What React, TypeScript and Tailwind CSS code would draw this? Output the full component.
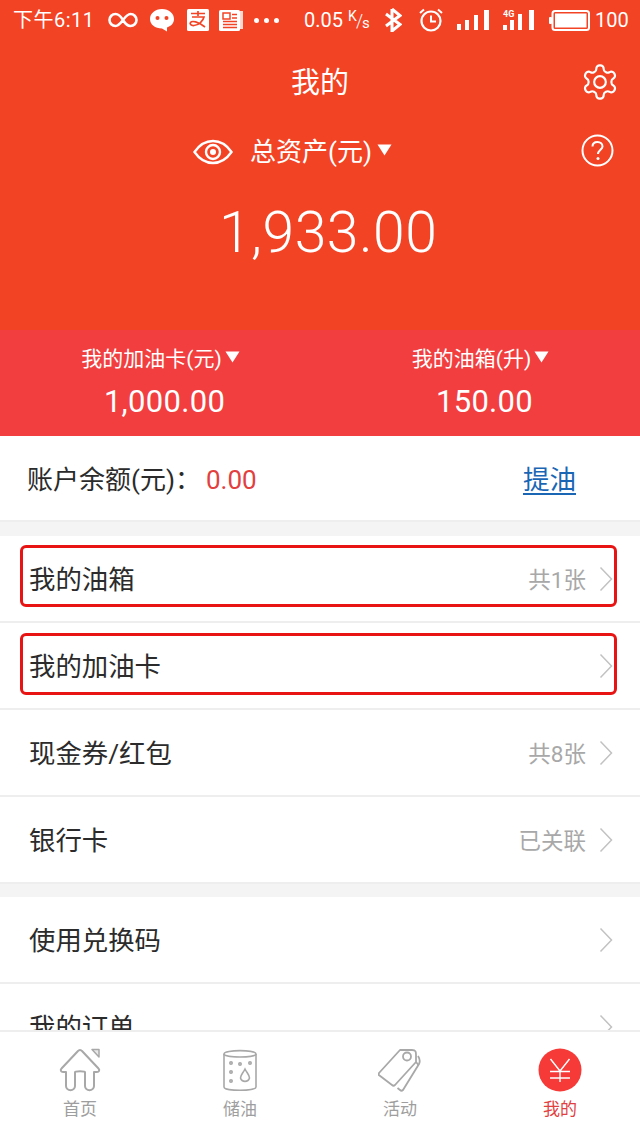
import React from 'react';

const Triangle = ({ className = '' }: { className?: string }) => (
  <svg width="15" height="12" viewBox="0 0 15 12" className={className}>
    <path d="M0.5 0.5h14L7.500 11.500z" fill="#fff" />
  </svg>
);

const Chevron = () => (
  <svg width="14" height="26" viewBox="0 0 14 26" className="shrink-0">
    <path d="M1.500 1.500L12.500 13L1.500 24.500" fill="none" stroke="#c2c2c2" strokeWidth="1.500" />
  </svg>
);

const StatusBar = () => (
  <div className="flex h-10 items-center text-white">
    <span className="ml-[13px] w-[96px] whitespace-nowrap text-[20px] leading-none tracking-[0.5px]">下午6:11</span>
    <svg width="30" height="16" viewBox="0 0 30 16" className="ml-[-1px]">
      <path d="M15 8C12 3 10 2 7.500 2A6 6 0 0 0 7.500 14C10 14 12 12 15 8C18 4 20 2 22.500 2A6 6 0 0 1 22.500 14C20 14 18 13 15 8Z" fill="none" stroke="#fff" strokeWidth="2.600" />
    </svg>
    <svg width="26" height="24" viewBox="0 0 26 24" className="ml-[11px]">
      <path d="M13 1C6 1 1 5.500 1 11C1 16.500 6 20.500 13 20.500L18 23.500L18 19.500C22.500 18 25 15 25 11C25 5.500 20 1 13 1Z" fill="#fff" />
      <circle cx="8.500" cy="10" r="2" fill="#f34325" />
      <circle cx="17.500" cy="10" r="2" fill="#f34325" />
    </svg>
    <svg width="22" height="22" viewBox="0 0 22 22" className="ml-[12px]">
      <rect width="22" height="22" rx="1.500" fill="#fff" />
      <path d="M4 4.500H18M11 2V7M5 8H17C16 12 12 16 7 16.500C4 16.800 2.500 15 3.500 13.500C5 11.500 11 12.500 18 18" fill="none" stroke="#f34325" strokeWidth="1.700" />
    </svg>
    <svg width="24" height="22" viewBox="0 0 24 22" className="ml-[10px]">
      <rect x="21" y="2" width="3" height="18" fill="#ffd9d0" />
      <rect x="0" y="1" width="21" height="21" rx="1.500" fill="#fff" />
      <rect x="4" y="4" width="7" height="6" fill="none" stroke="#f34325" strokeWidth="1.500" />
      <path d="M13 5.500H18M13 9H18M4 12.500H18M4 15.500H18M4 18.500H18" stroke="#f34325" strokeWidth="1.500" />
    </svg>
    <div className="ml-[11px] flex gap-[5px]">
      <span className="h-[5px] w-[5px] rounded-full bg-white" />
      <span className="h-[5px] w-[5px] rounded-full bg-white" />
      <span className="h-[5px] w-[5px] rounded-full bg-white" />
    </div>
    <span className="ml-[25px] text-[20px] leading-none">0.05</span>
    <span className="relative ml-[5px] h-[24px] w-[22px]">
      <span className="absolute left-0 top-[1px] text-[14px] leading-none">K</span>
      <span className="absolute left-[8px] top-[4px] text-[18px] font-light leading-none">/</span>
      <span className="absolute left-[14px] top-[8px] text-[15px] leading-none">s</span>
    </span>
    <svg width="18" height="24" viewBox="0 0 18 24" className="ml-[14px]">
      <path d="M8 1L8 23L16 16.500L2 6M8 1L16 7.500L2 18" fill="none" stroke="#fff" strokeWidth="3" />
    </svg>
    <svg width="24" height="24" viewBox="0 0 24 24" className="ml-[17px]">
      <circle cx="12" cy="13" r="9.500" fill="none" stroke="#fff" strokeWidth="2.200" />
      <path d="M12 7.500V13.500H17" fill="none" stroke="#fff" strokeWidth="2" />
      <path d="M1 5L5 1.500M23 5L19 1.500" stroke="#fff" strokeWidth="2" />
    </svg>
    <svg width="33" height="22" viewBox="0 0 33 22" className="ml-[14px]">
      <path d="M0 15h4v6H0zM8 11h4v10H8zM17 6h4v15h-4zM27 1h5v20h-5z" fill="#fff" />
    </svg>
    <svg width="33" height="22" viewBox="0 0 33 22" className="ml-[13px]">
      <path d="M0 16h4v5H0zM7 11h4v10H7zM15 5h4v16h-4zM26 1h5v20h-5z" fill="#fff" />
      <text x="0" y="8" fontSize="9" fontWeight="700" fill="#fff" fontFamily="Roboto, sans-serif">4G</text>
    </svg>
    <svg width="41" height="21" viewBox="0 0 41 21" className="ml-[13px]">
      <rect x="3.500" y="1" width="36.500" height="19" rx="2.500" fill="none" stroke="#fff" strokeWidth="2" />
      <rect x="6" y="3.500" width="31.500" height="14" fill="#fff" />
      <rect x="0" y="7" width="3" height="7" rx="1" fill="#fff" />
    </svg>
    <span className="ml-[5px] text-[20px] leading-none">100</span>
  </div>
);

const Header = () => (
  <div className="flex h-[330px] shrink-0 flex-col bg-[#f34325] text-white">
    <StatusBar />
    <div className="relative mt-[24px] flex h-[38px] items-center justify-center">
      <span className="text-[29px] leading-none">我的</span>
      <svg width="40" height="40" viewBox="0 0 24 24" className="absolute right-[20px] top-[-2px]" fill="none" stroke="#fff" strokeWidth="1.300" strokeLinejoin="round">
        <path d="M12.220 2h-.440a2 2 0 0 0-2 2v.180a2 2 0 0 1-1 1.730l-.430.250a2 2 0 0 1-2 0l-.150-.080a2 2 0 0 0-2.730.730l-.220.380a2 2 0 0 0 .730 2.730l.150.100a2 2 0 0 1 1 1.720v.510a2 2 0 0 1-1 1.740l-.150.090a2 2 0 0 0-.730 2.730l.220.380a2 2 0 0 0 2.730.730l.150-.080a2 2 0 0 1 2 0l.430.250a2 2 0 0 1 1 1.730V20a2 2 0 0 0 2 2h.440a2 2 0 0 0 2-2v-.180a2 2 0 0 1 1-1.730l.430-.250a2 2 0 0 1 2 0l.150.080a2 2 0 0 0 2.730-.730l.220-.390a2 2 0 0 0-.730-2.730l-.150-.080a2 2 0 0 1-1-1.740v-.500a2 2 0 0 1 1-1.740l.150-.090a2 2 0 0 0 .730-2.730l-.220-.380a2 2 0 0 0-2.730-.730l-.150.080a2 2 0 0 1-2 0l-.430-.250a2 2 0 0 1-1-1.730V4a2 2 0 0 0-2-2z" />
        <circle cx="12" cy="12" r="3.500" />
      </svg>
    </div>
    <div className="relative mt-[30px] flex h-[40px] items-center">
      <svg width="40" height="26" viewBox="0 0 40 26" className="ml-[193px]">
        <path d="M1.500 13C7 5 13 2 20 2C27 2 33 5 38.500 13C33 21 27 24 20 24C13 24 7 21 1.500 13Z" fill="none" stroke="#fff" strokeWidth="2.400" />
        <circle cx="20" cy="13" r="7" fill="none" stroke="#fff" strokeWidth="2.400" />
        <circle cx="20" cy="13" r="3" fill="#fff" />
      </svg>
      <span className="ml-[17px] whitespace-nowrap text-[26px] leading-none">总资产(元)</span>
      <Triangle className="ml-[5px] mt-[-4px]" />
      <svg width="33" height="33" viewBox="0 0 33 33" className="absolute right-[26px] top-[2px]">
        <circle cx="16.500" cy="16.500" r="15" fill="none" stroke="#fff" strokeWidth="2" />
        <path d="M11.500 12.500C11.500 9.500 13.500 8 16.500 8C19.500 8 21.500 10 21.500 12.500C21.500 15.500 17 16 17 20" fill="none" stroke="#fff" strokeWidth="2" />
        <circle cx="17" cy="24.500" r="1.500" fill="#fff" />
      </svg>
    </div>
    <div className="mt-[31px] pl-[219px] text-[57px] font-light leading-[60px] tracking-[0.5px]">1,933.00</div>
  </div>
);

const Balance = ({ label, value, className }: { label: string; value: string; className: string }) => (
  <div className={`flex flex-col items-center ${className}`}>
    <div className="mr-[8px] flex h-[30px] items-center">
      <span className="whitespace-nowrap text-[21px] leading-none">{label}</span>
      <Triangle className="ml-[3px] mt-[-5px]" />
    </div>
    <span className="mt-[12px] text-[31px] leading-none tracking-[0.3px]">{value}</span>
  </div>
);

const Row = ({ label, note, mark }: { label: string; note?: string; mark?: string }) => (
  <div className="relative flex h-[87px] shrink-0 items-center border-b-2 border-[#eeeeee] bg-white pl-[29px] pr-[27px]">
    <span className="mt-[4px] flex-1 text-[26.400px] leading-none text-[#2b2b2b]">{label}</span>
    {note && <span className="mr-[13px] mt-[4px] text-[22.500px] leading-none text-[#a8a8a8]">{note}</span>}
    <Chevron />
    {mark && <div className={`absolute left-[20px] right-[23px] h-[62px] rounded-[6px] border-[3px] border-[#e81313] ${mark}`} />}
  </div>
);

const TabItem = ({ label, active, children }: { label: string; active?: boolean; children: React.ReactNode }) => (
  <div className="flex flex-col items-center">
    <div className="flex h-[46px] w-[46px] items-center justify-center">{children}</div>
    <span className={`mt-[8px] text-[17px] leading-none ${active ? 'text-[#e2403f]' : 'text-[#9e9e9e]'}`}>{label}</span>
  </div>
);

const TabBar = () => (
  <div className="grid h-[108px] shrink-0 grid-cols-4 border-t-2 border-[#eeeeee] bg-white pt-[15px]">
    <TabItem label="首页">
      <svg width="42" height="44" viewBox="0 0 42 44" fill="none" stroke="#a8a8a8" strokeWidth="2" strokeLinejoin="round">
        <path d="M7 24H4C2 24 1 22 2.500 20.500L19 3C20 1.500 22 1.500 23 3L39.500 20.500C41 22 40 24 38 24H35V38C35 43.500 26 43.500 26 38V24C26 23 16 23 16 24V38C16 43.500 7 43.500 7 38Z" />
        <path d="M33 1.500H40V9Z" strokeWidth="1.500" fill="#e8e8e8" />
      </svg>
    </TabItem>
    <TabItem label="储油">
      <svg width="34" height="42" viewBox="0 0 34 42" fill="none" stroke="#a8a8a8" strokeWidth="1.600">
        <path d="M1 5C1 .500 33 .500 33 5V38C33 42.500 1 42.500 1 38Z" />
        <path d="M1 5C1 9 33 9 33 5" />
        <circle cx="8" cy="14" r="1.200" />
        <circle cx="17" cy="15" r="1.200" />
        <circle cx="27" cy="14" r="1.200" />
        <circle cx="8" cy="23" r="1.200" />
        <circle cx="8" cy="32" r="1.200" />
        <path d="M22 20C20 24 17.500 26 17.500 29A4.700 4.700 0 0 0 26.500 29C26.500 26 24 24 22 20Z" />
      </svg>
    </TabItem>
    <TabItem label="活动">
      <svg width="44" height="44" viewBox="0 0 44 44" fill="none" stroke="#a8a8a8" strokeWidth="1.800" strokeLinejoin="round">
        <path d="M1 25L22 2H34C38 2 38 4 38 7V14L17 37C16 38 15 38 14 37L1.500 27.500C.500 27 .500 26 1 25Z" />
        <circle cx="29" cy="8.500" r="4" />
        <path d="M40 8C42 11 42 14 41 16L25 42C24 43 23 43 22 42L19.500 40" />
        <path d="M38 14L40.500 17" />
      </svg>
    </TabItem>
    <TabItem label="我的" active>
      <svg width="44" height="44" viewBox="0 0 44 44">
        <circle cx="22" cy="22" r="21.500" fill="#f53a38" />
        <path d="M12.500 11L22 23L31.500 11M22 23V34M12 23.500H32M12 30H32" fill="none" stroke="#fff" strokeWidth="1.400" />
      </svg>
    </TabItem>
  </div>
);

export default function App() {
  return (
    <div
      className="flex h-[1138px] w-[640px] flex-col overflow-hidden bg-[#f4f4f4]"
      style={{ fontFamily: '"Roboto", "Noto Sans CJK SC", sans-serif' }}
    >
      <div className="flex min-h-0 flex-1 flex-col overflow-hidden">
        <Header />
        <div className="flex h-[106px] shrink-0 bg-[#f23e3e] pt-[14px] text-white">
          <Balance label="我的加油卡(元)" value="1,000.00" className="w-[329px]" />
          <Balance label="我的油箱(升)" value="150.00" className="w-[311px]" />
        </div>
        <div className="flex h-[86px] shrink-0 items-center border-b-2 border-[#eeeeee] bg-white pl-[27px] pr-[64px] pt-[4px] text-[26px] leading-none">
          <span className="text-[#2b2b2b]">账户余额(元)：</span>
          <span className="ml-[5px] flex-1 text-[#e2403f]">0.00</span>
          <span className="text-[26.500px] text-[#1a66b5] underline underline-offset-4">提油</span>
        </div>
        <div className="mt-[14px] flex flex-col">
          <Row label="我的油箱" note="共1张" mark="top-[9px]" />
          <Row label="我的加油卡" mark="top-[10px]" />
          <Row label="现金券/红包" note="共8张" />
          <Row label="银行卡" note="已关联" />
        </div>
        <div className="mt-[13px] flex flex-col">
          <Row label="使用兑换码" />
          <Row label="我的订单" />
        </div>
      </div>
      <TabBar />
    </div>
  );
}
